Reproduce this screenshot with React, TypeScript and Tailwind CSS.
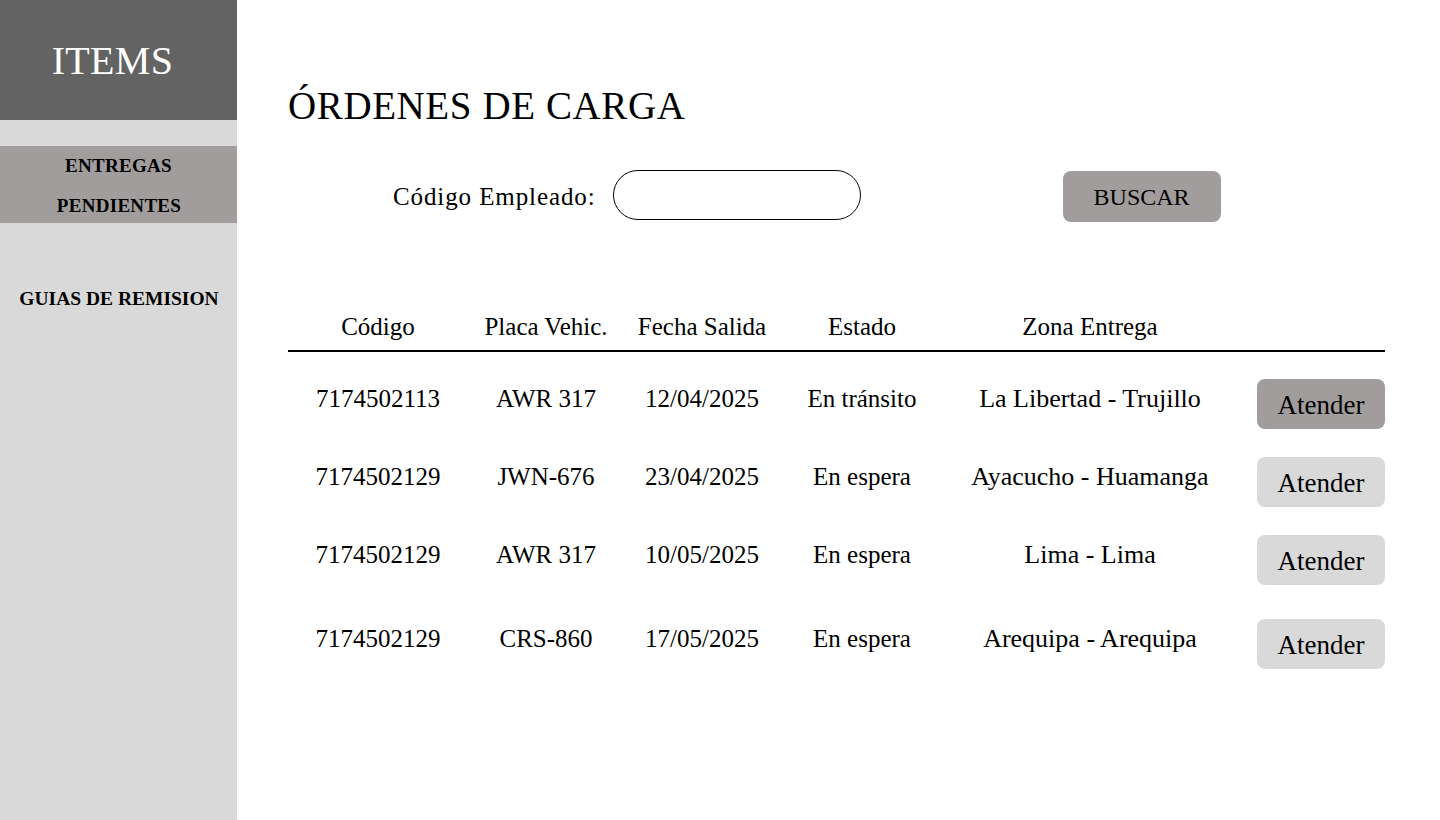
import React from "react";

const rows = [
  { code: "7174502113", placa: "AWR 317", fecha: "12/04/2025", estado: "En tránsito", zona: "La Libertad - Trujillo", active: true, mt: "mt-[27px]" },
  { code: "7174502129", placa: "JWN-676", fecha: "23/04/2025", estado: "En espera", zona: "Ayacucho - Huamanga", active: false, mt: "mt-[28px]" },
  { code: "7174502129", placa: "AWR 317", fecha: "10/05/2025", estado: "En espera", zona: "Lima - Lima", active: false, mt: "mt-[28px]" },
  { code: "7174502129", placa: "CRS-860", fecha: "17/05/2025", estado: "En espera", zona: "Arequipa - Arequipa", active: false, mt: "mt-[34px]" },
];

const cols = "grid grid-cols-[180px_156px_156px_164px_292px_1fr] items-center";

export default function App() {
  return (
    <div className="flex w-[1440px] h-[820px] bg-white text-black font-['Liberation_Serif',serif]">
      <aside className="w-[237px] shrink-0 bg-[#d9d9d9] flex flex-col">
        <div className="h-[120px] bg-[#636363] flex items-center justify-center pr-[12px]">
          <span className="text-white text-[40px] leading-none mt-[2px] tracking-[0.3px]">ITEMS</span>
        </div>
        <div className="mt-[26px] h-[77px] bg-[#a29d9d] flex flex-col items-center justify-center font-bold text-[19px] pt-[2px]">
          <span className="leading-[40px] tracking-[0.3px]">ENTREGAS</span>
          <span className="leading-[40px] tracking-[0.3px] ml-[1px]">PENDIENTES</span>
        </div>
        <div className="mt-[64px] text-center font-bold text-[19.5px] leading-[24px] pl-[1px]">GUIAS DE REMISION</div>
      </aside>
      <main className="flex-1 pl-[51px] pr-[55px]">
        <h1 className="mt-[84px] text-[39px] leading-[44px] tracking-[0.6px]">ÓRDENES DE CARGA</h1>
        <div className="flex items-start mt-[42px]">
          <label className="ml-[105px] mt-[12px] text-[25px] leading-[30px] tracking-[0.9px]">Código Empleado:</label>
          <div className="ml-[17px] w-[248px] h-[50px] rounded-full border border-black" />
          <button className="ml-[202px] mt-[1px] w-[158px] h-[51px] rounded-[8px] bg-[#a29d9d] text-[24px] leading-none">BUSCAR</button>
        </div>
        <div className="mt-[90px]">
          <div className={cols + " text-[25px] leading-[30px] pb-[8px] border-b-2 border-black text-center"}>
            <div>Código</div>
            <div>Placa Vehic.</div>
            <div>Fecha Salida</div>
            <div>Estado</div>
            <div>Zona Entrega</div>
            <div />
          </div>
          {rows.map((r, i) => (
            <div key={i} className={cols + " " + r.mt + " text-[25px] text-center"}>
              <div className="mt-[-11px]">{r.code}</div>
              <div className="mt-[-11px]">{r.placa}</div>
              <div className="mt-[-11px]">{r.fecha}</div>
              <div className="mt-[-11px]">{r.estado}</div>
              <div className="mt-[-11px] text-[26px]">{r.zona}</div>
              <div className="flex justify-end">
                <button className={(r.active ? "bg-[#a29d9d]" : "bg-[#d9d9d9]") + " w-[128px] h-[50px] rounded-[8px] text-[27px] leading-none pt-[2px]"}>Atender</button>
              </div>
            </div>
          ))}
        </div>
      </main>
    </div>
  );
}
